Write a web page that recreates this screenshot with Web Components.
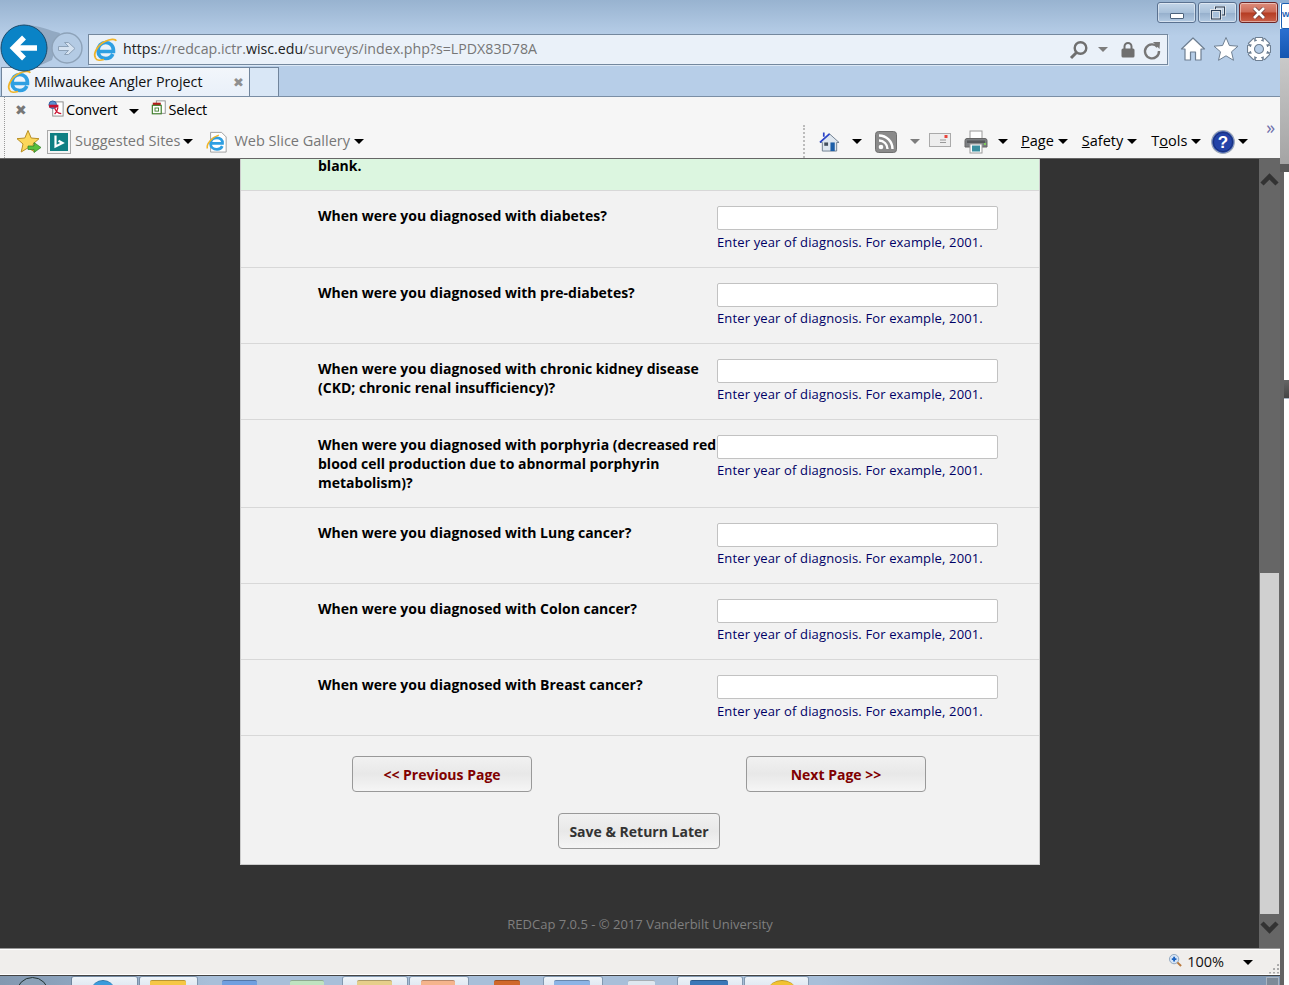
<!DOCTYPE html>
<html>
<head>
<meta charset="utf-8">
<title>Milwaukee Angler Project</title>
<style>
  html, body { margin: 0; height: 985px; overflow: hidden; background: #fff; }
  body { display: flex; font-family: "Open Sans", sans-serif; }
  .window { width: 1280px; height: 985px; display: flex; flex-direction: column; flex: none; }
</style>
</head>
<body>
<div class="window">
  <ie-chrome></ie-chrome>
  <survey-page>
    <survey-card>
      <span slot="banner">blank.</span>
      <survey-row loose>When were you diagnosed with diabetes?</survey-row>
      <survey-row>When were you diagnosed with pre-diabetes?</survey-row>
      <survey-row>When were you diagnosed with chronic kidney disease (CKD; chronic renal insufficiency)?</survey-row>
      <survey-row>When were you diagnosed with porphyria (decreased red blood cell production due to abnormal porphyrin metabolism)?</survey-row>
      <survey-row>When were you diagnosed with Lung cancer?</survey-row>
      <survey-row>When were you diagnosed with Colon cancer?</survey-row>
      <survey-row loose tight>When were you diagnosed with Breast cancer?</survey-row>
      <page-button slot="prev" tone="red">&lt;&lt; Previous Page</page-button>
      <page-button slot="next" tone="red">Next Page &gt;&gt;</page-button>
      <page-button slot="save">Save &amp; Return Later</page-button>
    </survey-card>
  </survey-page>
  <ie-status></ie-status>
  <win-taskbar></win-taskbar>
</div>
<side-strip></side-strip>

<script>
// 8 tooth gear outline, hole cut out with evenodd
function gearPath() {
  let d = '';
  for (let i = 0; i < 8; i++) {
    const a = i * Math.PI / 4;
    [[9, -.5], [12, -.3], [12, .3], [9, .5]].forEach(([r, o], j) => {
      const x = 13 + r * Math.sin(a + o), y = 13 - r * Math.cos(a + o);
      d += (i === 0 && j === 0 ? 'M' : 'L') + x.toFixed(2) + ' ' + y.toFixed(2);
    });
  }
  return d + 'ZM13 8.5a4.500 4.500 0 100 9 4.500 4.500 0 100-9Z';
}

const ICONS = {
  ie: [24, `<path d="M5 13.5H20.5C20.8 7.5 17 4.5 12.8 4.5 8.3 4.5 5 8 5 12.8 5 17.5 8.5 20.5 12.8 20.5 16 20.5 18.6 19 19.8 16" fill="none" stroke="#2e9fe2" stroke-width="3.6"/><path d="M2.5 20C-.5 15 6 6 12 3.5 17 1 22.5 .5 23 3" fill="none" stroke="#f0b429" stroke-width="1.8"/><path d="M2.5 20C3.5 23 8 22.5 11 21.5" fill="none" stroke="#f0b429" stroke-width="1.6"/>`],
  nav: [88, `<path d="M24 25C40 25 50 31 60 33L52 60 30 70Z" fill="#92a9c2"/><circle cx="67" cy="48" r="15" fill="#b4cbe4" stroke="#8da2b8" stroke-width="1.4"/><path d="M58.500 46.500H68.500L64.500 42.500H68.500L75 48.500 68.500 54.500H64.500L68.500 50.500H58.500Z" fill="#d5e2f0" stroke="#8da2b8"/><circle cx="24" cy="48" r="23" fill="#0a83c6" stroke="#1a4a6b" stroke-width="1"/><path d="M13 48H37M24 37.500L13.500 48 24 58.500" fill="none" stroke="#fff" stroke-width="5.500"/>`, 50],
  search: [20, `<circle cx="11.5" cy="8" r="5.8" fill="none" stroke="#6f6f6f" stroke-width="2.4"/><path d="M7.5 12.5L2 18" stroke="#6f6f6f" stroke-width="3"/>`],
  lock: [16, `<path d="M4.5 8V5.5a3.5 3.5 0 017 0V8" fill="none" stroke="#6f6f6f" stroke-width="2"/><rect x="1.5" y="7.5" width="13" height="9" rx="1.5" fill="#6f6f6f"/>`, 18],
  refresh: [18, `<path d="M14.5 6A7 7 0 1016 10" fill="none" stroke="#777" stroke-width="2.4"/><path d="M10 1L17 1 16.5 8Z" fill="#777"/>`],
  home: [26, `<path d="M13 2L1.5 13H5V24H10.5V16H15.5V24H21V13H24.5Z" fill="#fff" stroke="#6e7f92" stroke-width="1.2" stroke-linejoin="round"/>`],
  star: [26, `<path d="M13 1.5L16.4 9.5 25 10.2 18.5 15.8 20.5 24.3 13 19.8 5.5 24.3 7.5 15.8 1 10.2 9.6 9.5Z" fill="#fff" stroke="#6e7f92" stroke-width="1"/>`],
  gear: [26, `<path d="${gearPath()}" fill="#fff" fill-rule="evenodd" stroke="#6e7f92" stroke-width="1.1" stroke-linejoin="round"/>`],
  pdf: [18, `<rect x="5" y="2" width="11" height="15" fill="#fff" stroke="#8a8a8a"/><circle cx="5" cy="5" r="4" fill="#5b8fd0" stroke="#2f5f9f"/><path d="M1 8H11V5H1Z" fill="#c8102e"/><path d="M7 8C8 12 10 14 14 14.500M7 15C9 13 10 11 10.500 8" fill="none" stroke="#c8102e" stroke-width="1.300"/>`],
  select: [18, `<rect x="6" y="1" width="10" height="14" fill="#fff" stroke="#8a8a8a"/><path d="M2 3H11V6H2Z" fill="#b51c1c"/><rect x="1.500" y="6" width="10" height="9.500" fill="#fff" stroke="#3e7d2a" stroke-width="1.300"/><rect x="4.500" y="9" width="4" height="3.500" fill="none" stroke="#3e7d2a"/>`],
  favs: [26, `<path d="M12 1.500L15.200 9 23 9.700 17 15 18.800 23 12 18.800 5.200 23 7 15 1 9.700 8.800 9Z" fill="#fbd75b" stroke="#b98f25"/><path d="M12 17H18V13.500L25 18.500 18 23.500V20.500H12Z" fill="#57c03e" stroke="#2e7d26" stroke-width=".7"/>`],
  bing: [24, `<rect x=".5" y=".5" width="23" height="23" fill="#f4f4f4" stroke="#a9a9a9"/><rect x="3" y="3" width="18" height="18" fill="#0f7f82"/><path d="M8.500 5.500V16.500L15.500 13 11.500 10.800" fill="none" stroke="#fff" stroke-width="2.200"/>`],
  slice: [24, `<path d="M5 1.500H17L22 6.500V23H5Z" fill="#fff" stroke="#9a9a9a"/><path d="M5 13.500H18C18.300 9.500 15.500 7.500 12 7.500 8 7.500 5 10 5 13.800 5 17.500 8 20 12 20 14.800 20 16.800 18.800 17.800 16.500" fill="none" stroke="#2e9fe2" stroke-width="3"/><path d="M1.500 19C0 14 7 6.500 14 4.500" fill="none" stroke="#f0b429" stroke-width="1.600"/>`],
  house: [22, `<path d="M11 3L1 12H3.500V21H18.500V12H21Z" fill="#dfe7ef" stroke="#6f7f90"/><path d="M11 3L1 12M5 1.500V6" stroke="#2b44c8" stroke-width="1.800"/><rect x="5.500" y="12" width="4" height="3.500" fill="#44505e"/><rect x="12" y="12" width="4.500" height="9" fill="#1d5fa8"/>`],
  rss: [22, `<rect x=".5" y=".5" width="21" height="21" rx="3" fill="#8a8a8a" stroke="#6f6f6f"/><circle cx="6" cy="16" r="2.300" fill="#fff"/><path d="M4 9.500A8.500 8.500 0 0112.500 18M4 4.500A13.500 13.500 0 0117.500 18" fill="none" stroke="#fff" stroke-width="2.400"/>`],
  mail: [22, `<rect x=".5" y="1.500" width="21" height="13" fill="#eee" stroke="#aaa"/><path d="M11 8H17M11 10.500H17" stroke="#999"/><rect x="15.500" y="3" width="3" height="3" fill="#e8453c"/>`, 16],
  printer: [24, `<rect x="6" y="1" width="12" height="8" fill="#fff" stroke="#9a9a9a"/><path d="M1 10.500Q1 8.500 3 8.500H21Q23 8.500 23 10.500V17H1Z" fill="#7c7f82" stroke="#666"/><rect x="3" y="10.500" width="18" height="2.500" fill="#55585b"/><rect x="6" y="14" width="12" height="9" fill="#fff" stroke="#9a9a9a"/><rect x="8" y="15.500" width="8" height="6" fill="#3a8f9f"/><rect x="20" y="13" width="2" height="2" fill="#7fd05a"/>`],
  help: [24, `<circle cx="12" cy="12" r="11.300" fill="#2343a8" stroke="#9aa6b8" stroke-width="1.200"/><circle cx="12" cy="12" r="9.500" fill="none" stroke="#183078" stroke-width="1"/><text x="12" y="18" text-anchor="middle" font-family="Liberation Sans, sans-serif" font-weight="700" font-size="17" fill="#fff">?</text>`],
  zoom: [14, `<circle cx="5.500" cy="5.500" r="5" fill="#d6e4f5" stroke="#8ea4bd"/><path d="M3 5.500H8M5.500 3V8" stroke="#1a62c0" stroke-width="2"/><path d="M9 9L13 13" stroke="#b9793d" stroke-width="2.200"/>`],
  chevup: [21, `<path d="M3 15L10.500 7.500 18 15" fill="none" stroke="#333" stroke-width="4.500"/>`],
  chevdown: [21, `<path d="M3 6L10.500 13.500 18 6" fill="none" stroke="#333" stroke-width="4.500"/>`]
};

class IeIcon extends HTMLElement {
  constructor() {
    super();
    const [w, body, h] = ICONS[this.getAttribute('name')];
    const size = this.getAttribute('size') || w;
    const ratio = (h || w) / w;
    this.attachShadow({ mode: 'open' }).innerHTML = `
      <style>:host { display: inline-flex; flex: none; } svg { display: block; overflow: visible; }</style>
      <svg width="${size}" height="${size * ratio}" viewBox="0 0 ${w} ${h || w}">${body}</svg>`;
  }
}
customElements.define('ie-icon', IeIcon);

const chromeTemplate = document.createElement('template');
chromeTemplate.innerHTML = `
  <style>
    :host { display: block; flex: none; font-family: "Open Sans", sans-serif; color: #000; position: relative; z-index: 2; }
    .top { height: 96px; background: linear-gradient(#98b3d0, #b7cee8 36px); border-bottom: 1px solid #7a8ea5; }
    .controls { height: 25px; box-sizing: border-box; padding: 2px 2px 0 0; display: flex; justify-content: flex-end; gap: 2px; }
    .ctl { width: 39px; height: 21px; box-sizing: border-box; border: 1px solid #5a7190; border-radius: 3px; display: flex; align-items: center; justify-content: center;
           background: linear-gradient(#c3d5e8 0, #a9c1da 50%, #94aecb 51%, #b4cbe3 100%); box-shadow: inset 0 0 0 1px rgba(255,255,255,.45); }
    .ctl.close { border-color: #6e2525; background: linear-gradient(#dd8c7b 0, #cc6a56 48%, #b53c22 52%, #c9604a 100%); }
    .min { width: 12px; height: 4px; margin-top: 6px; background: #fff; border: 1px solid #4c627c; border-radius: 1px; }
    .nav { height: 42px; display: flex; align-items: flex-start; }
    .arrows { width: 88px; height: 46px; flex: none; margin-top: -25px; padding-top: 25px; position: relative; z-index: 3; }
    .arrows ie-icon { margin-top: -25px; }
    .address { margin-top: 9px; width: 1080px; height: 31px; box-sizing: border-box; border: 1px solid #74889e; box-shadow: 1px 1px 0 #dce8f5; background: #eaf1f9;
               display: flex; align-items: center; padding: 0 6px 0 4px; font-size: 14.2px; color: #767676; white-space: nowrap; }
    .address b { font-weight: 400; color: #222; }
    .url { margin-left: 6px; flex: 1; padding-bottom: 2px; }
    .caret { width: 0; height: 0; border: 5px solid transparent; border-top: 5px solid #000; border-bottom: 0; flex: none; display: inline-block; }
    .caret.grey { border-top-color: #7d7d7d; }
    .addr-tools { display: flex; align-items: center; }
    .addr-tools .caret { margin: 0 12px 0 9px; }
    .addr-tools ie-icon:last-child { margin-left: 7px; }
    .shell-icons { display: flex; gap: 7px; margin: 11px 0 0 12px; }
    .tabs { height: 29px; display: flex; margin-left: 1px; }
    .tab { width: 249px; box-sizing: border-box; border: 1px solid #71859c; border-bottom: 0; background: linear-gradient(#f2f6fb, #e9f0f9);
           display: flex; align-items: center; padding: 0 5px 0 5px; font-size: 14.3px; color: #111; }
    .tab span { margin-left: 3px; flex: 1; white-space: nowrap; padding-bottom: 2px; }
    .tab i { font-style: normal; font-size: 13px; color: #8f8f8f; }
    .newtab { width: 29px; box-sizing: border-box; border: 1px solid #71859c; border-width: 1px 1px 0 0; background: #d9e7f6; }
    .bars { height: 61px; background: #f6f6f6; border-bottom: 1px solid #666; position: relative; font-size: 14.5px; }
    .tx { padding-bottom: 3px; white-space: nowrap; }
    .row1 { height: 28px; display: flex; align-items: center; padding-left: 15px; }
    .row1 .x { font-size: 14px; color: #777; width: 33px; margin-top: -3px; }
    .row1 .caret { margin: 0 12px 0 12px; }
    .row1 .tx { letter-spacing: -.25px; }
    .row1 ie-icon { margin: -6px 1px 0 0; }
    .row2 { height: 33px; display: flex; align-items: center; padding-left: 16px; color: #767676; }
    .group { display: flex; align-items: center; }
    .tool { color: #000; }
    .tool u { text-decoration-thickness: 1px; }
    .sep { width: 0; height: 33px; border-left: 2px dotted #bcbcbc; margin: 0 14px 0 439px; }
    .grip { position: absolute; left: 4px; top: 0; bottom: 0; border-left: 1px dotted #999; }
    .more { color: #6f6faa; font-size: 18px; line-height: 15px; margin: -28px 0 0 18px; }
  </style>
  <div class="top">
    <div class="controls">
      <div class="ctl"><div class="min"></div></div>
      <div class="ctl">
        <svg width="16" height="14" viewBox="0 0 16 14"><rect x="5.500" y="1" width="9" height="8" fill="none" stroke="#fff" stroke-width="2.600"/><rect x="5.500" y="1" width="9" height="8" fill="none" stroke="#2d4058" stroke-width="1.200"/><rect x="1.500" y="4.500" width="9" height="8.500" fill="#a8c0da" stroke="#fff" stroke-width="2.600"/><rect x="1.500" y="4.500" width="9" height="8.500" fill="none" stroke="#2d4058" stroke-width="1.200"/></svg>
      </div>
      <div class="ctl close">
        <svg width="14" height="12" viewBox="0 0 14 12"><path d="M2 1L12 11M12 1L2 11" stroke="#5c3030" stroke-width="4"/><path d="M2 1L12 11M12 1L2 11" stroke="#fff" stroke-width="2.800"/></svg>
      </div>
    </div>
    <div class="nav">
      <div class="arrows"><ie-icon name="nav"></ie-icon></div>
      <div class="address">
        <ie-icon name="ie"></ie-icon>
        <div class="url"><b>https</b>://redcap.ictr.<b>wisc.edu</b>/surveys/index.php?s=LPDX83D78A</div>
        <div class="addr-tools">
          <ie-icon name="search"></ie-icon><span class="caret grey"></span><ie-icon name="lock"></ie-icon><ie-icon name="refresh"></ie-icon>
        </div>
      </div>
      <div class="shell-icons"><ie-icon name="home"></ie-icon><ie-icon name="star"></ie-icon><ie-icon name="gear"></ie-icon></div>
    </div>
    <div class="tabs">
      <div class="tab"><ie-icon name="ie"></ie-icon><span>Milwaukee Angler Project</span><i>✖</i></div>
      <div class="newtab"></div>
    </div>
  </div>
  <div class="bars">
    <div class="grip"></div>
    <div class="row1">
      <div class="x">✖</div>
      <ie-icon name="pdf" size="17"></ie-icon><span class="tx">Convert</span><span class="caret"></span>
      <ie-icon name="select" size="16"></ie-icon><span class="tx">Select</span>
    </div>
    <div class="row2">
      <ie-icon name="favs" style="margin-right:5px"></ie-icon>
      <ie-icon name="bing" style="margin-right:4px"></ie-icon>
      <span class="tx">Suggested Sites</span><span class="caret" style="margin:0 13px 0 3px"></span>
      <ie-icon name="slice" size="22" style="margin-right:6px"></ie-icon>
      <span class="tx">Web Slice Gallery</span><span class="caret" style="margin-left:4px"></span>
      <div class="sep"></div>
      <ie-icon name="house" size="21"></ie-icon><span class="caret" style="margin:0 13px 0 12px"></span>
      <ie-icon name="rss"></ie-icon><span class="caret grey" style="margin:0 9px 0 13px"></span>
      <ie-icon name="mail" style="margin:-4px 13px 0 0"></ie-icon>
      <ie-icon name="printer"></ie-icon><span class="caret" style="margin:0 13px 0 10px"></span>
      <span class="tx tool"><u>P</u>age</span><span class="caret" style="margin:0 14px 0 4px"></span>
      <span class="tx tool"><u>S</u>afety</span><span class="caret" style="margin:0 14px 0 4px"></span>
      <span class="tx tool">T<u>o</u>ols</span><span class="caret" style="margin:0 10px 0 4px"></span>
      <ie-icon name="help"></ie-icon><span class="caret" style="margin-left:3px"></span>
      <span class="more">»</span>
    </div>
  </div>`;

class IeChrome extends HTMLElement {
  constructor() {
    super();
    this.attachShadow({ mode: 'open' }).appendChild(chromeTemplate.content.cloneNode(true));
  }
}
customElements.define('ie-chrome', IeChrome);

const pageTemplate = document.createElement('template');
pageTemplate.innerHTML = `
  <style>
    :host { display: flex; flex: none; height: 789px; background: #333; overflow: hidden; }
    .content { width: 1259px; flex: none; }
    .foot { width: 800px; margin: 50px 0 0 240px; text-align: center; font-size: 13px; line-height: 18px; color: #7f7f7f; }
    .bar { width: 21px; flex: none; background: #666; display: flex; flex-direction: column; align-items: center; padding-top: 10px; box-sizing: border-box; }
    .thumb { width: 19px; height: 341px; background: #d0d0d0; margin: 383px 0 3px; flex: none; }
  </style>
  <div class="content">
    <slot></slot>
    <div class="foot">REDCap 7.0.5 - © 2017 Vanderbilt University</div>
  </div>
  <div class="bar">
    <ie-icon name="chevup"></ie-icon>
    <div class="thumb"></div>
    <ie-icon name="chevdown"></ie-icon>
  </div>`;

class SurveyPage extends HTMLElement {
  constructor() {
    super();
    this.attachShadow({ mode: 'open' }).appendChild(pageTemplate.content.cloneNode(true));
  }
}
customElements.define('survey-page', SurveyPage);

const cardTemplate = document.createElement('template');
cardTemplate.innerHTML = `
  <style>
    :host { display: block; width: 800px; box-sizing: border-box; margin-left: 240px; background: #f2f2f2; border: solid #ccc; border-width: 0 1px 1px; }
    .banner { height: 32px; box-sizing: border-box; background: #dcf6e0; border-bottom: 1px solid #d8d8d8; padding-left: 77px; font: 700 14px/14px "Open Sans", sans-serif; color: #000; }
    .pager { display: flex; justify-content: space-between; padding: 20px 113px 0 111px; }
    .save { display: flex; justify-content: center; padding: 21px 2px 15px 0; }
  </style>
  <div class="banner"><slot name="banner"></slot></div>
  <slot></slot>
  <div class="pager"><slot name="prev"></slot><slot name="next"></slot></div>
  <div class="save"><slot name="save"></slot></div>`;

class SurveyCard extends HTMLElement {
  constructor() {
    super();
    this.attachShadow({ mode: 'open' }).appendChild(cardTemplate.content.cloneNode(true));
  }
}
customElements.define('survey-card', SurveyCard);

const rowTemplate = document.createElement('template');
rowTemplate.innerHTML = `
  <style>
    :host { display: flex; box-sizing: border-box; padding: 15px 0; border-bottom: 1px solid #d8d8d8; font-family: "Open Sans", sans-serif; }
    :host([tight]) { padding-bottom: 14px; }
    .label { width: 399px; margin-left: 77px; flex: none; font-size: 14px; font-weight: 700; line-height: 19px; color: #000; }
    .field { width: 281px; }
    input { display: block; width: 100%; height: 24px; box-sizing: border-box; margin: 0; padding: 0 4px; background: #fff; border: 1px solid #c2c2c2; border-radius: 2px; }
    .note { margin-top: 2px; font-size: 13px; letter-spacing: .14px; line-height: 19px; color: #000066; white-space: nowrap; }
    :host([loose]) .note { margin-top: 3px; }
  </style>
  <div class="label"><slot></slot></div>
  <div class="field">
    <input type="text">
    <div class="note">Enter year of diagnosis. For example, 2001.</div>
  </div>`;

class SurveyRow extends HTMLElement {
  constructor() {
    super();
    this.attachShadow({ mode: 'open' }).appendChild(rowTemplate.content.cloneNode(true));
  }
}
customElements.define('survey-row', SurveyRow);

const buttonTemplate = document.createElement('template');
buttonTemplate.innerHTML = `
  <style>
    :host { display: block; }
    button { display: block; height: 36px; width: 180px; box-sizing: border-box; padding: 0; border: 1px solid #999; border-radius: 4px; cursor: pointer;
             background: linear-gradient(#f1f1f1, #e8e8e8 50%, #f5f5f5); font: 700 14px "Open Sans", sans-serif; color: #333; }
    :host([tone="red"]) button { color: #800000; }
    :host(:not([tone])) button { width: 162px; }
  </style>
  <button><slot></slot></button>`;

class PageButton extends HTMLElement {
  constructor() {
    super();
    this.attachShadow({ mode: 'open' }).appendChild(buttonTemplate.content.cloneNode(true));
  }
}
customElements.define('page-button', PageButton);

const statusTemplate = document.createElement('template');
statusTemplate.innerHTML = `
  <style>
    :host { display: flex; flex: none; height: 28px; box-sizing: border-box; align-items: center; justify-content: flex-end; background: #f0eeec;
            border-top: 1px solid #999; box-shadow: inset 0 1px 0 #fff, inset 0 -1px 0 #fff; border-bottom: 1px solid #444; padding-right: 1px;
            font: 14.5px "Open Sans", sans-serif; color: #111; }
    ie-icon { margin: -4px 5px 0 0; }
    span { padding-bottom: 2px; }
    .caret { width: 0; height: 0; border: 5px solid transparent; border-top: 5px solid #000; border-bottom: 0; margin: 0 15px 0 19px; }
    .grip { width: 11px; height: 11px; margin-top: 12px; background: radial-gradient(circle, #aaa 1px, transparent 1.300px) 0 0 / 4px 4px; clip-path: polygon(100% 0, 100% 100%, 0 100%); }
  </style>
  <ie-icon name="zoom" size="13"></ie-icon><span>100%</span><div class="caret"></div><div class="grip"></div>`;

class IeStatus extends HTMLElement {
  constructor() {
    super();
    this.attachShadow({ mode: 'open' }).appendChild(statusTemplate.content.cloneNode(true));
  }
}
customElements.define('ie-status', IeStatus);

// only the top few pixels of the taskbar are on screen
const TASKS = [
  { l: 72, w: 65, btn: 1, icon: '#3a9bdc', iw: 22, il: 20, round: 1 },
  { l: 140, w: 57, btn: 1, icon: '#f6c744', iw: 36, il: 10 },
  { l: 222, w: 35, icon: '#6f9fe0', iw: 35, il: 0 },
  { l: 290, w: 34, icon: '#bfe3c0', iw: 34, il: 0 },
  { l: 343, w: 64, btn: 1, icon: '#e6cf8a', iw: 35, il: 14 },
  { l: 410, w: 58, btn: 1, icon: '#f5b48c', iw: 34, il: 11 },
  { l: 494, w: 26, icon: '#d0682a', iw: 26, il: 0 },
  { l: 544, w: 58, btn: 1, icon: '#8cb4e6', iw: 36, il: 10 },
  { l: 628, w: 27, icon: '#dfe8f0', iw: 27, il: 0 },
  { l: 678, w: 64, btn: 1, icon: '#3a78b8', iw: 38, il: 12 },
  { l: 745, w: 63, btn: 1, icon: '#f2c230', iw: 26, il: 24, round: 1 }
];

class WinTaskbar extends HTMLElement {
  constructor() {
    super();
    const root = this.attachShadow({ mode: 'open' });
    let x = 49;
    let html = '';
    TASKS.forEach(t => {
      html += `<div class="task ${t.btn ? 'btn' : ''}" style="margin-left:${t.l - x}px;width:${t.w}px">
        <div class="icon ${t.round ? 'round' : ''}" style="margin-left:${t.il}px;width:${t.iw}px;background:${t.icon}"></div></div>`;
      x = t.l + t.w;
    });
    root.innerHTML = `
      <style>
        :host { display: flex; flex: 1; min-height: 0; overflow: hidden; background: linear-gradient(90deg, #8398b0 0, #8da4be 70px, #a8bfd9 210px, #a8bfd9 820px, #8098b4 1100px, #7e96b2 100%); padding-top: 1px; position: relative; }
        .orb { width: 33px; height: 33px; margin-left: 16px; box-sizing: border-box; border-radius: 50%; border: 1px solid #233; background: #8aa0b6; flex: none; }
        .task { height: 20px; flex: none; box-sizing: border-box; padding-top: 3px; border-radius: 2px 2px 0 0; }
        .task.btn { background: linear-gradient(#eef3f8, #cfdceb); box-shadow: 0 0 0 1px rgba(60,80,100,.35); }
        .icon { height: 18px; border-radius: 2px 2px 0 0; box-sizing: border-box; border-top: 1px solid rgba(0,0,0,.25); }
        .icon.round { border-radius: 50% 50% 0 0; }
        .desk { margin-left: auto; width: 13px; height: 20px; flex: none; background: #7d8a98; border: 1px solid #aab4c0; box-sizing: border-box; margin-right: 1px; }
      </style>
      <div class="orb"></div>${html}<div class="desk"></div>`;
  }
}
customElements.define('win-taskbar', WinTaskbar);

const sideTemplate = document.createElement('template');
sideTemplate.innerHTML = `
  <style>
    :host { display: flex; flex-direction: column; width: 9px; height: 985px; flex: none; overflow: hidden; background: #fff; font-family: "Liberation Sans", sans-serif; }
    .cap { height: 3px; background: #8fb0d4; }
    .word { height: 26px; box-sizing: border-box; background: #fff; border: 1px solid #1a5fb4; border-right: 0; border-radius: 2px 0 0 2px; color: #1a5fb4; font-size: 8px; font-weight: 700; line-height: 22px; margin-left: 1px; }
    .blue { height: 29px; background: linear-gradient(#2a6fd0, #1456b0); }
    .grey { height: 106px; background: linear-gradient(#c9c9c9, #a4a4a4); }
    .dark { height: 8px; background: #5a5a5a; }
    .rest { flex: 1; min-height: 0; display: flex; }
    .edge { width: 4px; flex: none; background: #636363; }
    .white { flex: 1; background: #fff; padding-top: 208px; }
    .chip { height: 18px; background: linear-gradient(#666, #444); border-bottom: 1px solid #a9b7c6; }
  </style>
  <div class="cap"></div>
  <div class="word">W</div>
  <div class="blue"></div>
  <div class="grey"></div>
  <div class="dark"></div>
  <div class="rest"><div class="edge"></div><div class="white"><div class="chip"></div></div></div>`;

class SideStrip extends HTMLElement {
  constructor() {
    super();
    this.attachShadow({ mode: 'open' }).appendChild(sideTemplate.content.cloneNode(true));
  }
}
customElements.define('side-strip', SideStrip);
</script>
</body>
</html>
